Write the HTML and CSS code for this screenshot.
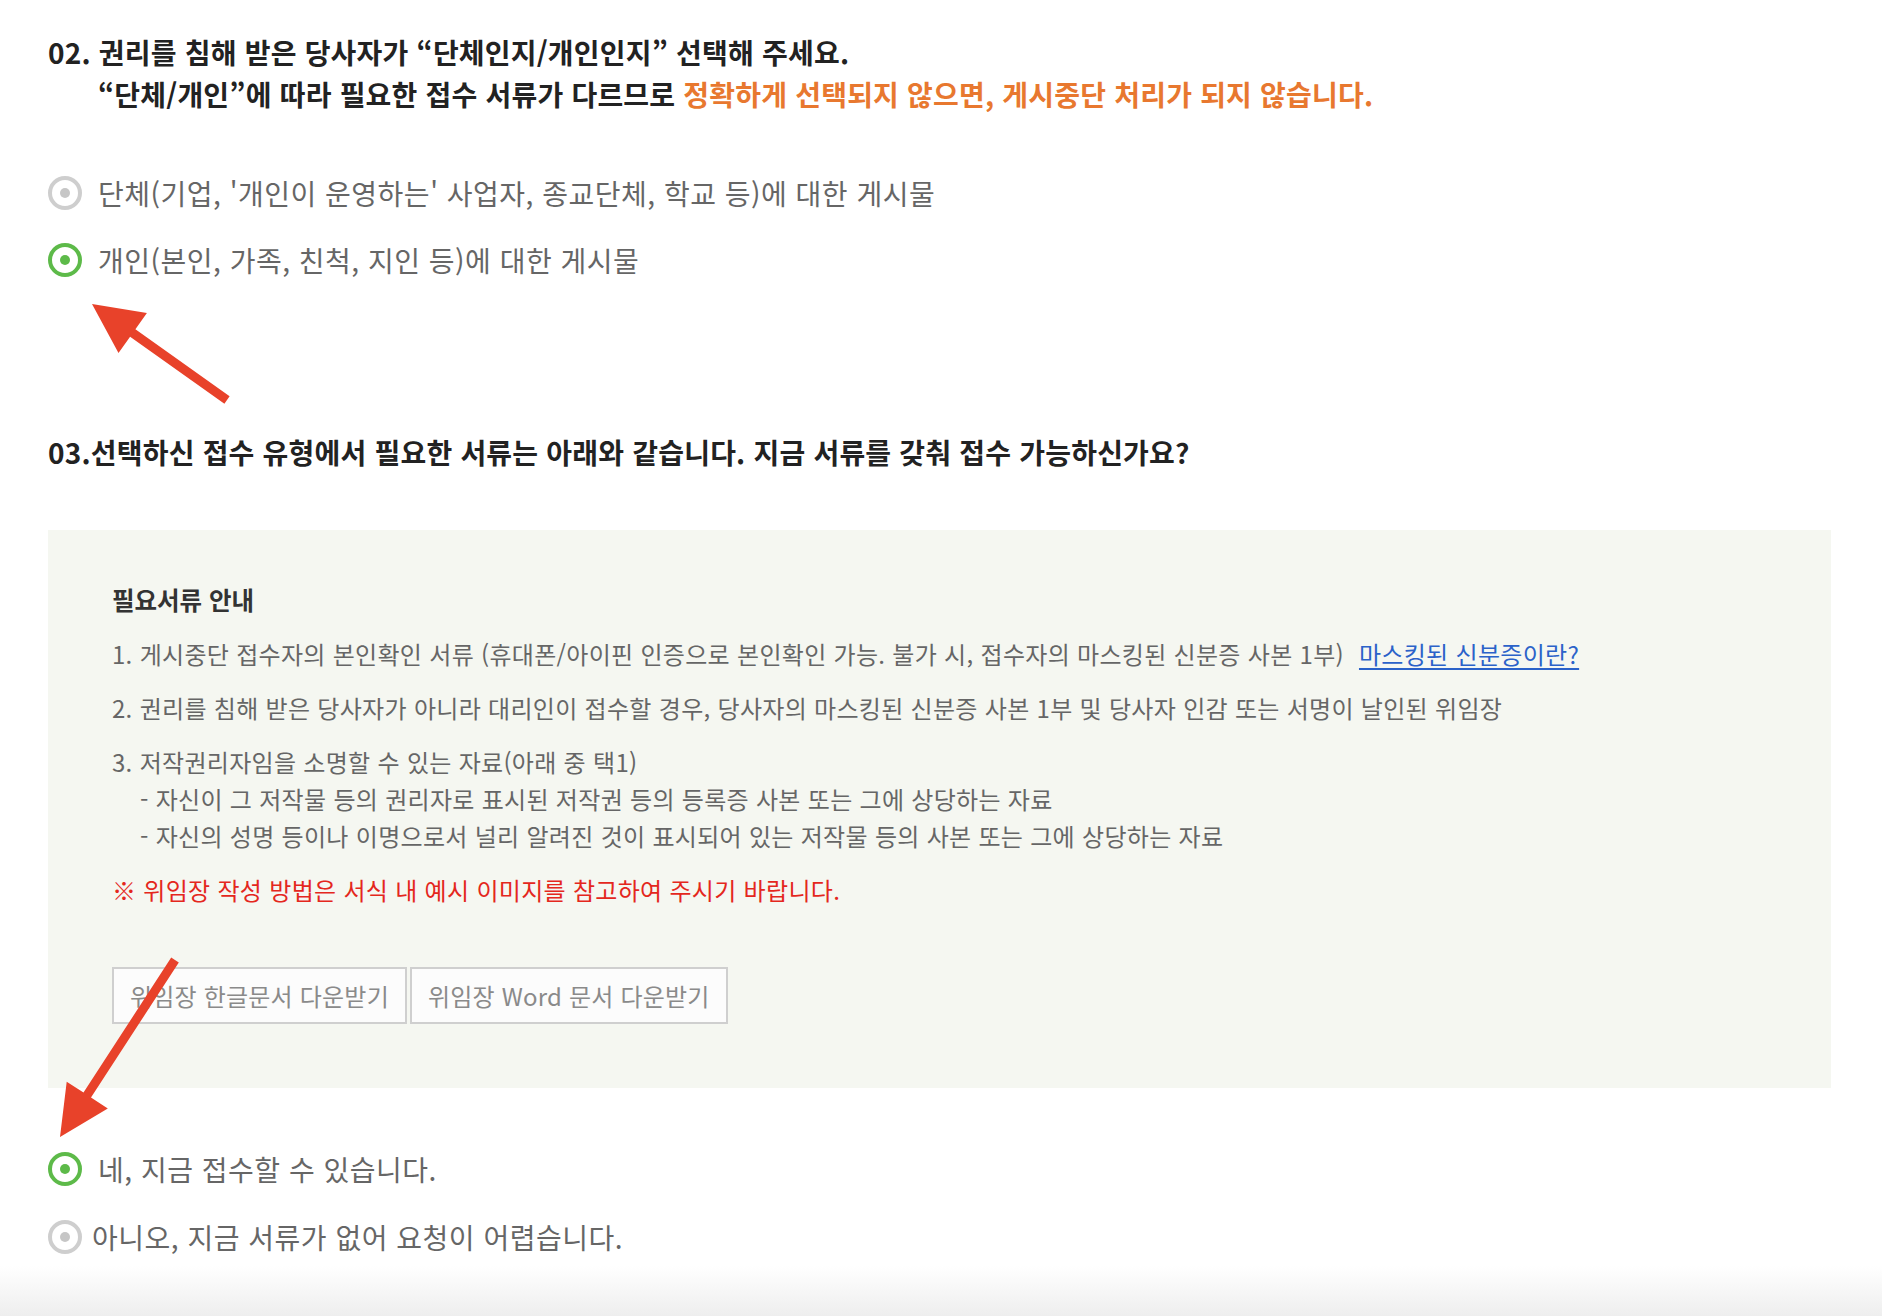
FILE: index.html
```html
<!DOCTYPE html>
<html lang="ko">
<head>
    <meta charset="UTF-8">
    <meta name="viewport" content="width=device-width, initial-scale=1.0">
    <title>게시중단 요청</title>
    <link rel="stylesheet" href="styles.css">
</head>
<body>
    <div class="page">
        <section class="step">
            <h2 class="step-title">
                02. 권리를 침해 받은 당사자가 “단체인지/개인인지” 선택해 주세요.
                <span class="step-sub">“단체/개인”에 따라 필요한 접수 서류가 다르므로 <em class="warn">정확하게 선택되지 않으면, 게시중단 처리가 되지 않습니다.</em></span>
            </h2>

            <ul class="choice-list">
                <li class="choice"><span class="radio"></span><span>단체(기업, '개인이 운영하는' 사업자, 종교단체, 학교 등)에 대한 게시물</span></li>
                <li class="choice is-checked"><span class="radio"></span><span>개인(본인, 가족, 친척, 지인 등)에 대한 게시물</span></li>
            </ul>
        </section>

        <section class="step step-docs">
            <h2 class="step-title">03.선택하신 접수 유형에서 필요한 서류는 아래와 같습니다. 지금 서류를 갖춰 접수 가능하신가요?</h2>

            <div class="doc-box">
                <h3 class="doc-title">필요서류 안내</h3>
                <ul class="doc-list">
                    <li>1. 게시중단 접수자의 본인확인 서류 (휴대폰/아이핀 인증으로 본인확인 가능. 불가 시, 접수자의 마스킹된 신분증 사본 1부) <a href="#" class="doc-link">마스킹된 신분증이란?</a></li>
                    <li>2. 권리를 침해 받은 당사자가 아니라 대리인이 접수할 경우, 당사자의 마스킹된 신분증 사본 1부 및 당사자 인감 또는 서명이 날인된 위임장</li>
                    <li>
                        3. 저작권리자임을 소명할 수 있는 자료(아래 중 택1)
                        <div class="doc-sub">- 자신이 그 저작물 등의 권리자로 표시된 저작권 등의 등록증 사본 또는 그에 상당하는 자료</div>
                        <div class="doc-sub">- 자신의 성명 등이나 이명으로서 널리 알려진 것이 표시되어 있는 저작물 등의 사본 또는 그에 상당하는 자료</div>
                    </li>
                </ul>
                <p class="doc-note">※ 위임장 작성 방법은 서식 내 예시 이미지를 참고하여 주시기 바랍니다.</p>

                <div class="doc-buttons">
                    <button class="doc-btn">위임장 한글문서 다운받기</button>
                    <button class="doc-btn">위임장 Word 문서 다운받기</button>
                </div>
            </div>

            <ul class="choice-list choice-list-bottom">
                <li class="choice is-checked"><span class="radio"></span><span>네, 지금 접수할 수 있습니다.</span></li>
                <li class="choice choice-tight"><span class="radio"></span><span>아니오, 지금 서류가 없어 요청이 어렵습니다.</span></li>
            </ul>
        </section>

        <div class="page-fade"></div>

        <!-- annotation arrows drawn over the page -->
        <svg class="arrows" width="1882" height="1316" viewBox="0 0 1882 1316">
            <polygon points="92,304 146.9,313 135.4,329.3 229.6,396.3 224.4,403.7 130.1,336.7 118.5,353" />
            <polygon points="60,1137 66.7,1081.7 83.5,1092.6 171.2,957.5 178.8,962.5 91,1097.5 107.8,1108.4" />
        </svg>
    </div>
</body>
</html>
```

FILE: styles.css
```css
body {
    margin: 0;
    background: #fff;
    font-family: "Noto Sans CJK KR", "Noto Sans", sans-serif;
}

.page {
    position: relative;
    padding: 31px 51px 0 48px;
    min-height: 1316px;
    box-sizing: border-box;
    display: flex;
    flex-direction: column;
}

.step-title {
    margin: 0;
    font-size: 28px;
    line-height: 42px;
    letter-spacing: 0.2px;
    font-weight: 700;
    color: #222;
}

.step-sub {
    display: block;
    padding-left: 50px;
}

.warn {
    font-style: normal;
    color: #e8782f;
}

.step-docs {
    margin-top: 151px;
}

.choice-list {
    list-style: none;
    margin: 58px 0 0;
    padding: 0;
}

.choice-list-bottom {
    margin-top: 61px;
}

.choice {
    display: flex;
    align-items: center;
    gap: 16px;
    height: 40px;
    font-size: 28px;
    letter-spacing: 0.5px;
    color: #666;
}

.choice + .choice {
    margin-top: 27px;
}

.choice-list-bottom .choice + .choice {
    margin-top: 28px;
}

.choice-tight {
    gap: 10px;
}

.radio {
    position: relative;
    flex: none;
    width: 34px;
    height: 34px;
    box-sizing: border-box;
    border: 4px solid #cecece;
    border-radius: 50%;
}

.radio::after {
    content: "";
    position: absolute;
    left: 8px;
    top: 8px;
    width: 10px;
    height: 10px;
    border-radius: 50%;
    background: #c6c6c6;
}

.is-checked .radio {
    border-color: #5dba49;
}

.is-checked .radio::after {
    background: #5dba49;
}

.doc-box {
    margin-top: 57px;
    padding: 51px 64px 64px;
    background: #f5f7f1;
}

.doc-title {
    margin: 0;
    font-size: 24.5px;
    line-height: 37px;
    font-weight: 700;
    color: #333;
}

.doc-list {
    list-style: none;
    margin: 0;
    padding: 0;
}

.doc-list li,
.doc-note {
    margin: 17px 0 0;
    font-size: 24px;
    line-height: 37px;
    letter-spacing: 0.3px;
    color: #666;
}

.doc-sub {
    padding-left: 28px;
}

.doc-link {
    margin-left: 8px;
    color: #2b62c9;
    text-underline-offset: 4px;
}

.doc-note {
    color: #e4271d;
}

.doc-buttons {
    display: flex;
    gap: 3px;
    margin-top: 59px;
}

.doc-btn {
    height: 57px;
    padding: 0 16px;
    box-sizing: border-box;
    border: 2px solid #cfcfcf;
    background: #fcfcfc;
    color: #8a8a8a;
    font-family: inherit;
    font-size: 24px;
    letter-spacing: 0.2px;
    cursor: pointer;
}

.page-fade {
    margin: auto -51px 0 -48px;
    height: 50px;
    background: linear-gradient(#fff, #eeeeee);
}

.arrows {
    position: absolute;
    left: 0;
    top: 0;
    pointer-events: none;
    fill: #e8422a;
}
```
